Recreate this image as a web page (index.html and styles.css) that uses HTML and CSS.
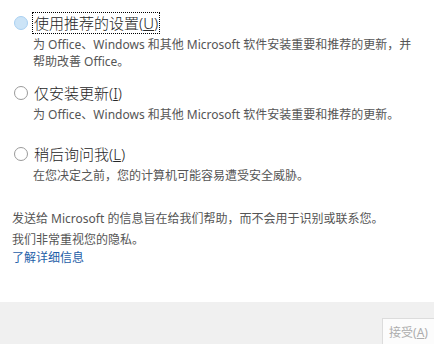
FILE: index.html
```html
<!DOCTYPE html>
<html lang="zh-CN">
<head>
    <meta charset="UTF-8">
    <title>更新设置</title>
    <link rel="stylesheet" href="styles.css">
</head>
<body>
    <div class="page">
        <div class="options">
            <div class="option">
                <span class="radio checked"></span>
                <div class="option-body">
                    <div class="option-title focused">使用推荐的设置(<u>U</u>)</div>
                    <div class="option-desc">为 Office、Windows 和其他 Microsoft 软件安装重要和推荐的更新，并帮助改善 Office。</div>
                </div>
            </div>
            <div class="option">
                <span class="radio"></span>
                <div class="option-body">
                    <div class="option-title">仅安装更新(<u>I</u>)</div>
                    <div class="option-desc">为 Office、Windows 和其他 Microsoft 软件安装重要和推荐的更新。</div>
                </div>
            </div>
            <div class="option later">
                <span class="radio"></span>
                <div class="option-body">
                    <div class="option-title">稍后询问我(<u>L</u>)</div>
                    <div class="option-desc">在您决定之前，您的计算机可能容易遭受安全威胁。</div>
                </div>
            </div>
        </div>

        <div class="privacy">
            <p>发送给 Microsoft 的信息旨在给我们帮助，而不会用于识别或联系您。</p>
            <p class="last">我们非常重视您的隐私。</p>
            <a href="#">了解详细信息</a>
        </div>
    </div>

    <div class="footer">
        <button class="btn" disabled>接受(<u>A</u>)</button>
    </div>
</body>
</html>
```

FILE: styles.css
```css
html, body {
    margin: 0;
    padding: 0;
    height: 100%;
}
body {
    font-family: "Noto Sans", "Noto Sans CJK SC", sans-serif;
    background: #ffffff;
    color: #333333;
    display: flex;
    flex-direction: column;
}
.page {
    flex: 1;
    padding: 12px 20px 0 12px;
}
.options {
    display: flex;
    flex-direction: column;
    gap: 12px;
}
.option {
    display: flex;
    align-items: flex-start;
    gap: 4px;
}
.option.later {
    margin-top: 8px;
}
.radio {
    width: 12px;
    height: 12px;
    border: 1px solid #9a9a9a;
    border-radius: 50%;
    margin-top: 4px;
    margin-left: 2px;
    flex-shrink: 0;
    background: #ffffff;
}
.radio.checked {
    background: #cce4f7;
    border-color: #a9d0f2;
}
.option-title {
    font-size: 15px;
    font-weight: 300;
    line-height: 20px;
    color: #262626;
    display: inline-block;
    padding: 0 1px;
    border: 1px dotted transparent;
}
.option-title.focused {
    border-color: #000000;
}
.option-desc {
    font-size: 12px;
    line-height: 17px;
    color: #555555;
    margin-top: 2px;
    padding-left: 1px;
}
.privacy {
    margin-top: 26px;
    font-size: 12px;
    color: #555555;
}
.privacy p {
    margin: 0 0 3px 0;
    line-height: 18px;
}
.privacy p.last {
    margin-bottom: 0;
}
.privacy a {
    color: #1e5ea8;
    text-decoration: none;
    line-height: 18px;
}
.footer {
    height: 42px;
    background: #f0f0f0;
    display: flex;
    justify-content: flex-end;
    align-items: flex-end;
}
.btn {
    font-family: "Noto Sans", "Noto Sans CJK SC", sans-serif;
    font-size: 12px;
    color: #adadad;
    background: #fcfcfc;
    border: 1px solid #dcdcdc;
    border-right: none;
    border-bottom: none;
    width: 52px;
    height: 26px;
    padding: 0;
}
.btn u {
    text-decoration: underline;
}
```
